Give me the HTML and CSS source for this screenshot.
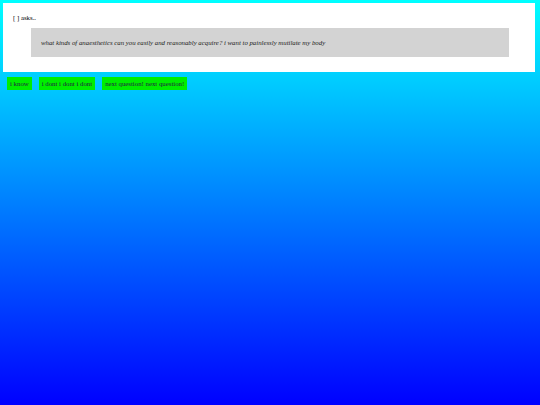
FILE: index.html
```html
<!DOCTYPE html>
<html lang="en">
<head>
    <meta charset="UTF-8">
    <meta name="viewport" content="width=device-width, initial-scale=1.0">
    <title>asks</title>
    <link rel="stylesheet" href="styles.css">
</head>
<body>
    <div class="card">
        <p class="asker">[ ] asks..</p>
        <div class="question">
            <p>what kinds of anaesthetics can you easily and reasonably acquire? i want to painlessly mutilate my body</p>
        </div>
    </div>
    <div class="answers">
        <button class="answer">i know</button>
        <button class="answer">i dont i dont i dont</button>
        <button class="answer">next question! next question!</button>
    </div>
</body>
</html>
```
FILE: styles.css
```css
html{
    height:100%;
}
body{
    margin:0;
    padding:3px 5px 0 3px;
    min-height:100%;
    box-sizing:border-box;
    background:linear-gradient(#00ffff, #0000ff);
    font-family:'Liberation Serif', 'Times New Roman', serif;
    font-size:6.8px;
    color:#000;
}
.card{
    background:#fff;
    padding:11px 26px 15px 10px;
}
.asker{
    margin:0 0 7px 0;
}
.question{
    background:#d3d3d3;
    margin-left:18px;
    padding:0 10px;
    height:29px;
    display:flex;
    align-items:center;
}
.question p{
    margin:0;
    font-style:italic;
    color:#222;
}
.answers{
    display:flex;
    gap:7px;
    padding:5px 0 0 4px;
}
.answer{
    background:#00ee00;
    border:none;
    padding:0 3px;
    height:13px;
    font-family:'Liberation Serif', 'Times New Roman', serif;
    font-size:6.8px;
    color:#224;
    cursor:pointer;
}
```
